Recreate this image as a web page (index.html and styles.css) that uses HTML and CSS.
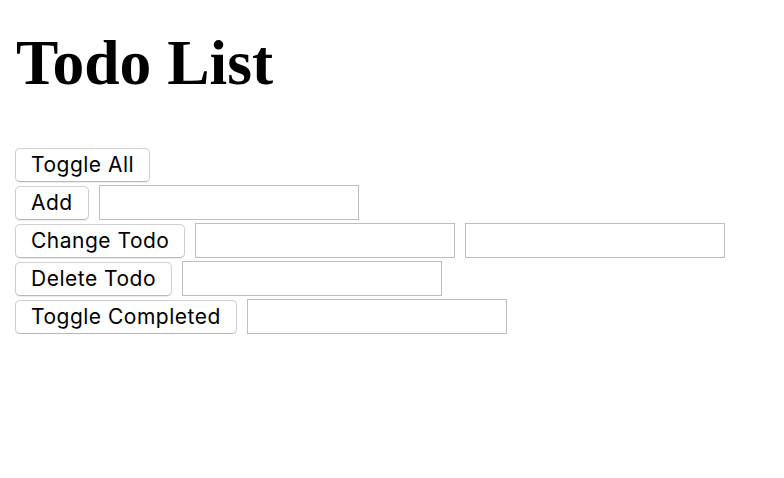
FILE: index.html
```html
<!DOCTYPE html>
<html>
<head>
<meta charset="utf-8">
<title>Todo List</title>
<link rel="stylesheet" href="styles.css">
</head>
<body>
<h1 class="title">Todo List</h1>
<div class="controls">
  <div class="row"><button class="btn">Toggle All</button></div>
  <div class="row"><button class="btn">Add</button><input class="field" type="text"></div>
  <div class="row"><button class="btn">Change Todo</button><input class="field" type="text"><input class="field" type="text"></div>
  <div class="row"><button class="btn">Delete Todo</button><input class="field" type="text"></div>
  <div class="row"><button class="btn">Toggle Completed</button><input class="field" type="text"></div>
</div>
</body>
</html>
```
FILE: styles.css
```css
html, body {
  margin: 0;
  padding: 0;
  background: #ffffff;
}
body {
  padding: 0 15px;
  font-family: "Liberation Serif", serif;
}
.title {
  font-family: "Liberation Serif", "Times New Roman", serif;
  font-weight: bold;
  font-size: 63.5px;
  line-height: 69px;
  margin: 28px 0 50px;
  padding-left: 1px;
  color: #000;
}
.controls {
  display: flex;
  flex-direction: column;
  gap: 3px;
}
.row {
  display: flex;
  align-items: center;
  gap: 10px;
  height: 35px;
}
.btn {
  box-sizing: border-box;
  height: 34px;
  margin: 0;
  padding: 0 15px;
  font-family: Inter, "Liberation Sans", sans-serif;
  font-size: 21px;
  letter-spacing: 0.5px;
  color: #000;
  background: #ffffff;
  border: 1px solid #cfcfcf;
  border-bottom-color: #b8b8b8;
  border-radius: 5px;
  box-shadow: 0 1px 1px rgba(0, 0, 0, 0.08);
  white-space: nowrap;
}
.field {
  box-sizing: border-box;
  width: 260px;
  height: 35px;
  margin: 0;
  padding: 0 4px;
  border: 1px solid #bdbdbd;
  border-radius: 0;
  background: #fff;
  font-size: 20px;
}
```
